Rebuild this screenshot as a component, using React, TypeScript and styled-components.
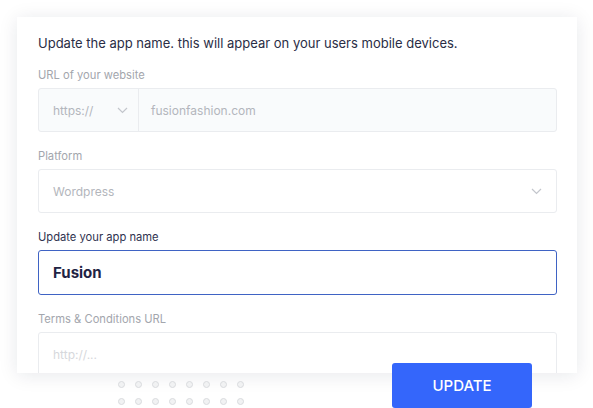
import React from "react";
import styled, { createGlobalStyle } from "styled-components";

const Global = createGlobalStyle`
  html, body { margin: 0; padding: 0; background: #ffffff; }
  body { font-family: "Inter", "Liberation Sans", sans-serif; -webkit-font-smoothing: antialiased; }
  * { box-sizing: border-box; }
`;

const Page = styled.div`
  width: 593px;
  height: 408px;
  overflow: hidden;
  padding: 17px 16px 0 17px;
`;

const Card = styled.div`
  width: 560px;
  height: 356px;
  overflow: hidden;
  background: #ffffff;
  box-shadow: 0 2px 18px rgba(20, 30, 60, 0.1);
  padding: 16px 20px 0 21px;
  display: flex;
  flex-direction: column;
`;

const Intro = styled.p`
  margin: 0 0 14px;
  font-size: 13px;
  line-height: 20px;
  color: #2a2d45;
`;

const Field = styled.div`
  display: flex;
  flex-direction: column;
  gap: 5px;
  & + & { margin-top: 16px; }
`;

const Label = styled.label<{ $active?: boolean }>`
  font-size: 11.2px;
  line-height: 16px;
  color: ${(p) => (p.$active ? "#2f3350" : "#a3a6ad")};
`;

const Box = styled.div<{ $tint?: boolean; $focus?: boolean }>`
  height: ${(p) => (p.$focus ? 45 : 44)}px;
  border: 1px solid ${(p) => (p.$focus ? "#3f63c4" : "#eaecef")};
  border-radius: 3px;
  background: ${(p) => (p.$tint ? "#f9fbfc" : "#ffffff")};
  display: flex;
  align-items: center;
`;

const Prefix = styled.div`
  width: 100px;
  height: 100%;
  border-right: 1px solid #eaecef;
  display: flex;
  align-items: center;
  justify-content: space-between;
  padding: 0 10px 0 14px;
`;

const Value = styled.span<{ $strong?: boolean; $faint?: boolean }>`
  flex: 1;
  padding: 0 13px 0 14px;
  font-size: ${(p) => (p.$strong ? 15 : 12)}px;
  font-weight: ${(p) => (p.$strong ? 700 : 400)};
  color: ${(p) => (p.$strong ? "#1f2444" : p.$faint ? "#d6d8dc" : "#b3b6bc")};
`;

const UrlValue = styled(Value)`
  padding-left: 12px;
`;

const PrefixText = styled.span`
  font-size: 12px;
  color: #b3b6bc;
`;

const ChevronWrap = styled.span`
  display: flex;
  padding-right: 14px;
`;

const Chevron = () => (
  <svg width="11" height="7" viewBox="0 0 11 7" fill="none">
    <path d="M1 1l4.5 4.5L10 1" stroke="#c3c6cc" strokeWidth="1.2" />
  </svg>
);

const Footer = styled.div`
  display: flex;
  align-items: flex-start;
  margin-top: -10px;
  padding: 0 45px 0 101px;
  position: relative;
`;

const Dots = styled.div`
  display: grid;
  grid-template-columns: repeat(8, 7px);
  gap: 10px 10px;
  margin-top: 18px;
`;

const Dot = styled.span`
  width: 7px;
  height: 7px;
  border-radius: 50%;
  background: #f1f2f3;
  border: 1px solid #d9dbde;
`;

const Button = styled.button`
  margin-left: auto;
  width: 140px;
  height: 45px;
  border: none;
  border-radius: 3px;
  background: #3466fb;
  color: #ffffff;
  font-family: "Inter", "Liberation Sans", sans-serif;
  font-size: 15px;
  font-weight: 500;
  cursor: pointer;
`;

export default function App() {
  return (
    <>
      <Global />
      <Page>
        <Card>
          <Intro>Update the app name. this will appear on your users mobile devices.</Intro>
          <Field>
            <Label>URL of your website</Label>
            <Box $tint>
              <Prefix>
                <PrefixText>https://</PrefixText>
                <Chevron />
              </Prefix>
              <UrlValue>fusionfashion.com</UrlValue>
            </Box>
          </Field>
          <Field>
            <Label>Platform</Label>
            <Box>
              <Value>Wordpress</Value>
              <ChevronWrap>
                <Chevron />
              </ChevronWrap>
            </Box>
          </Field>
          <Field>
            <Label $active>Update your app name</Label>
            <Box $focus>
              <Value $strong>Fusion</Value>
            </Box>
          </Field>
          <Field>
            <Label>Terms &amp; Conditions URL</Label>
            <Box>
              <Value $faint>http://...</Value>
            </Box>
          </Field>
        </Card>
        <Footer>
          <Dots>
            {Array.from({ length: 16 }).map((_, i) => (
              <Dot key={i} />
            ))}
          </Dots>
          <Button>UPDATE</Button>
        </Footer>
      </Page>
    </>
  );
}
